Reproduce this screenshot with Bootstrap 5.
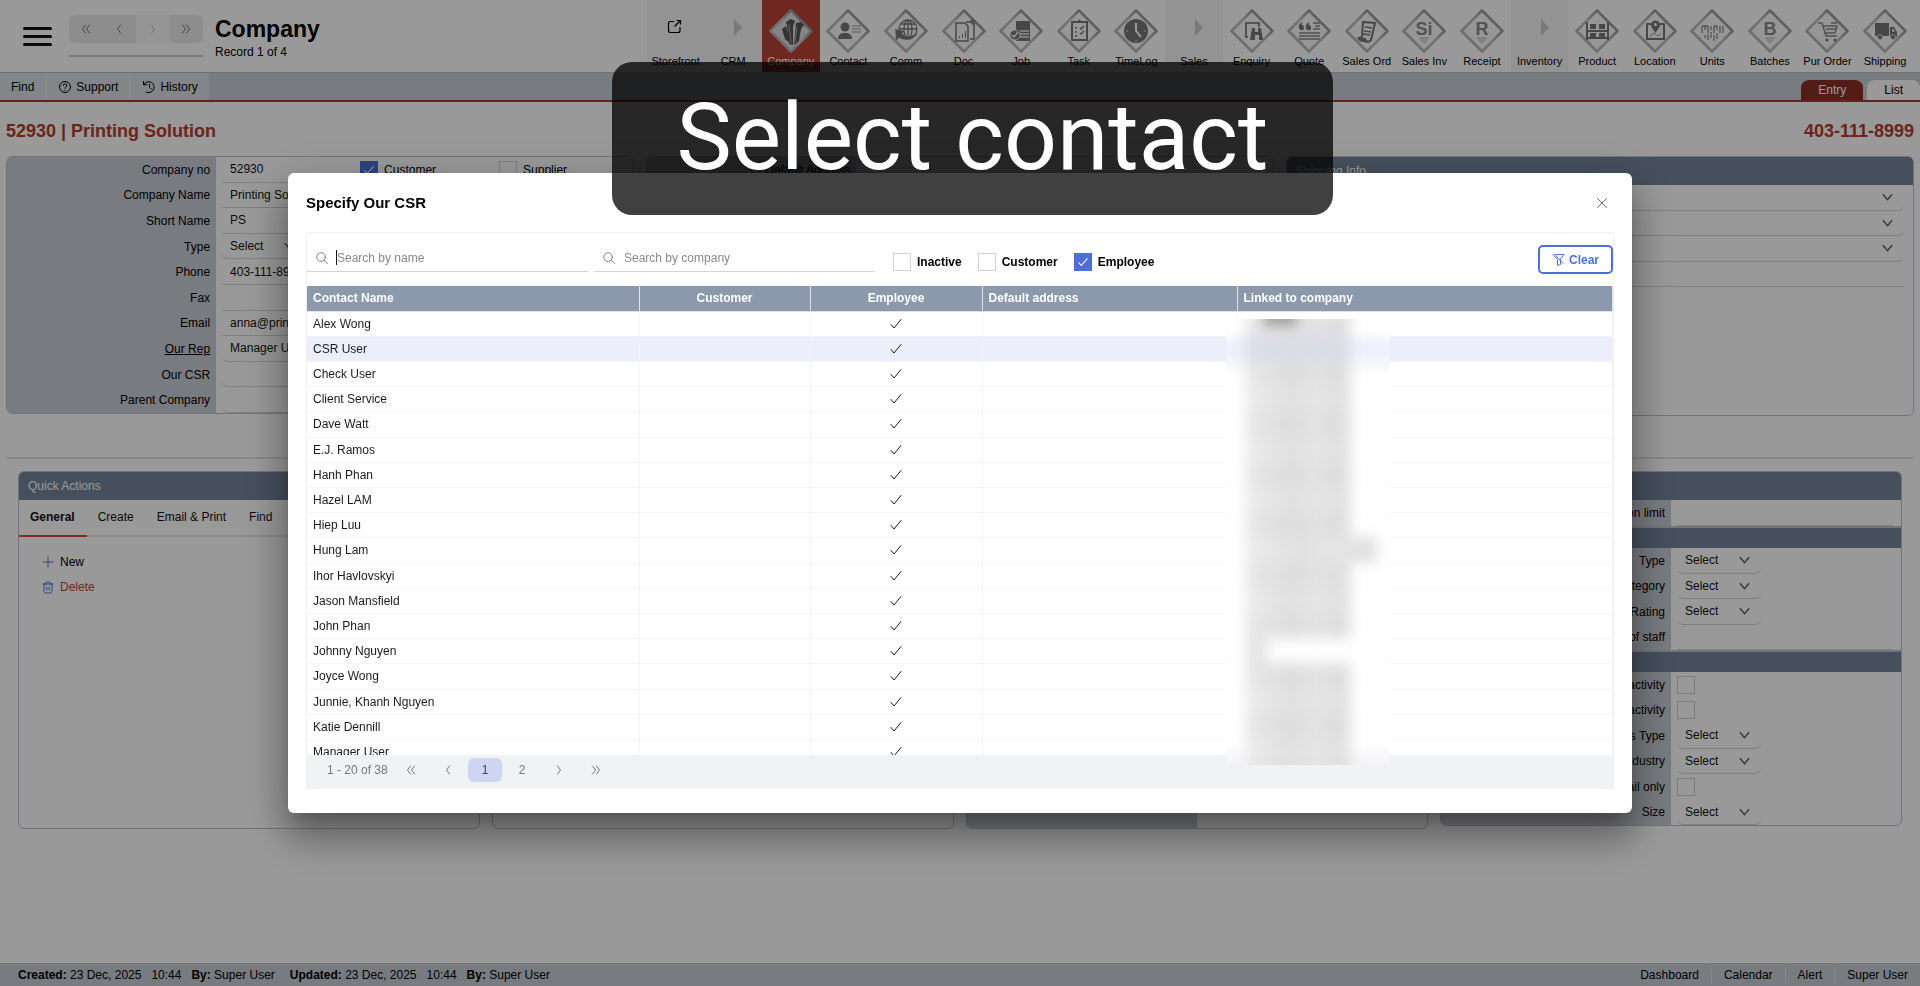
<!DOCTYPE html>
<html lang="en">
<head>
<meta charset="utf-8">
<meta name="viewport" content="width=device-width, initial-scale=1">
<title>Company</title>
<link href="https://cdn.jsdelivr.net/npm/bootstrap@5.3.0/dist/css/bootstrap.min.css" rel="stylesheet">
<style>
:root{--bar:#c8cdd5;--slate:#75849c;--head:#8c99ad;--red:#b84334;--deep:#8c3027;--blue:#4f6fd8}
body{font-family:"Liberation Sans",Arial,sans-serif;font-size:12px;line-height:16px;color:#000;background:#fff}
svg{display:block;flex:none}
.line{fill:none;stroke:currentColor;stroke-linecap:round;stroke-linejoin:round}
a{color:inherit;text-decoration:none}
h1{font-size:23px;line-height:28px}
h2{font-size:18px;line-height:20px;color:#b23c2e}
.topbar{height:73px;border-bottom:1px solid #bbb}
.burger{width:29px;height:19px;margin:27px 0 0 23px;border:0;background:none}
.burger span{height:3px;background:#111;border-radius:2px}
.recnav{width:134px;margin-left:17px;padding-top:15px}
.recnav .set{height:28px;border-radius:6px;background:#ececec;overflow:hidden}
.recnav button{border:0;background:none;color:#777}
.recnav button:disabled{background:#f8f8f8;color:#bbb}
.recnav .rule{height:2px;background:var(--bar);margin-top:12px}
.heading{padding:15px 0 0 12px}
.heading .count{padding-top:1px}
.modules{width:66%;margin-right:6px}
.modules a{flex:1 1 0;min-width:0;font-size:11px;padding-top:9px;color:#000}
.modules a.group{background:#f5f5f5}
.modules a.current{background:var(--red);color:#fff}
.modules .pic{height:44px}
.subbar{height:29px;background:var(--bar);border-bottom:2px solid #a63a2d}
.subbar .act{background:#d9dfe4;border-right:2px solid #e3e6ea;padding:0 11px}
.subbar .act:last-of-type{border:0}
.viewtab{height:20px;padding:0 17px;border-radius:8px 8px 0 0;background:#fff}
.viewtab.active{background:var(--deep);color:#fff}
.content{padding:19px 6px 0}
.panels{--bs-gutter-x:12px;margin-top:15px}
.cards{--bs-gutter-x:12px;margin-top:12px;padding:0 12px}
.panel{border:1px solid #bcc3ce;border-radius:6px;overflow:hidden}
.tall-card{height:358px}
.rows{height:256px}
.frow{flex:1 1 0}
.lab{width:33.4%;background:var(--bar);padding-right:6px;text-align:right;flex:none}
.half .lab{width:50%}
.field{border:0;border-bottom:1px solid #d5d5d5;background:none;height:100%;padding:0 8px;color:#111;outline:0;min-width:0}
.soft{border-radius:0 0 6px 6px}
select.field{appearance:none;background:url("data:image/svg+xml,%3Csvg xmlns='http://www.w3.org/2000/svg' viewBox='0 0 12 8'%3E%3Cpath d='M1 1l5 6 5-6' fill='none' stroke='%23555' stroke-width='1.4'/%3E%3C/svg%3E") no-repeat right 11px center/11px 8px}
select.short{width:84px}
.opt{gap:6px}
.bar{background:var(--slate);color:#fff;height:28px;padding:0 9px}
.bar.thin{height:22px;border-top:2px solid #bcc3ce}
.form-check-input{width:18px;height:18px;margin:0;border-radius:0!important;border:1px solid #d0d0d0;flex:none}
.form-check-input:checked{background-color:var(--blue);border-color:var(--blue);background-image:url("data:image/svg+xml,%3Csvg xmlns='http://www.w3.org/2000/svg' viewBox='0 0 18 18'%3E%3Cpath d='M4 9.500l3 3.500 7-8' fill='none' stroke='%23fff' stroke-width='1.200'/%3E%3C/svg%3E")}
.divide{height:2px;background:#e2e2e2;margin-top:41px}
.tabs{height:37px;border-bottom:2px solid #e8e8e8}
.tabs a{padding:9px 12px 9px 11px;height:37px;color:#111}
.tabs a.active{font-weight:700;border-bottom:2px solid #d64a38}
.tasks{padding:17px 23px;gap:9px}
.statusbar{height:23px;background:var(--bar)}
.stamps{padding-left:18px;gap:10px}
.stamps .next{margin-left:5px}
.statusbar nav a{padding:0 12px}
.modal-backdrop{opacity:.4}
.modal-dialog{max-width:70%;min-height:100%;margin-top:0;margin-bottom:0}
.modal-content{border:0;border-radius:6px;padding:0 18px 24px;box-shadow:0 11px 15px -7px rgba(0,0,0,.2),0 24px 38px 3px rgba(0,0,0,.3),0 9px 46px 8px rgba(0,0,0,.12)}
.modal-head{height:59px}
.modal-head .title{font-size:15px;font-weight:700}
.plain{border:0;background:none;color:#666;padding:0 7px 0 0}
.finder{border:1px solid #f0f0f0;border-bottom:0}
.filters{height:53px}
.seek{width:281px;border-bottom:1px solid #d5d5d5;height:24px;color:#777;padding:0 0 3px 9px}
.seek + .seek{margin-left:6px}
.seek input{border:0;outline:0;font-size:12px;padding:0;margin-left:9px}
.seek input::placeholder{color:#888}
.caret{width:1px;height:15px;background:#111;margin-left:8px}
.caret + input{margin-left:0!important}
.ticks{padding:4px 0 0 18px;gap:16px}
.clear{border:2px solid var(--blue);border-radius:5px;color:var(--blue);background:#fff;font-weight:700;width:75px;height:29px}
.people{height:469px;overflow:hidden}
.people table{table-layout:fixed;margin:0;font-size:12px;color:#1a1a1a}
.people th,.people td{height:25px;padding:0 6px;line-height:16px;vertical-align:middle;border:0 solid #f3f4f6;border-width:0 1px 1px 0;background:none;box-shadow:none}
.people thead th{background:var(--head);color:#fff;border-color:#dfe3e9}
.people tbody tr:nth-child(5n) td{height:26px}
.people tbody tr.picked td{background:#eceffb}
.people td svg{margin:0 auto}
.veil{position:absolute;left:70%;margin-left:5px;top:33px;width:164px;height:446px;overflow:hidden;background:linear-gradient(#fff 0,#fff 10px,#eef1fb 26px,#eef1fb 34px,#fff 58px,#fff 422px,#f3f4f6 446px)}
.veil .smears{margin-top:-8px;padding-left:19px;filter:blur(7px)}
.veil .smears div{height:25px;width:105px;background:linear-gradient(90deg,#ececec,#e0e0e0 45%,#e6e6e6 65%,#dfdfdf 95%)}
.veil .smears div:nth-child(odd){background:linear-gradient(90deg,#e9e9e9,#dcdcdc 45%,#e3e3e3 65%,#dcdcdc 95%)}
.veil .smears div:nth-child(2){background:#d9dde6}
.veil .smears .tall{height:26px}
.veil .bleed{position:absolute;left:38px;top:-8px;width:32px;height:14px;background:#999;filter:blur(6px)}
.pager{height:34px;background:#f1f2f4;color:#777;padding:0 0 4px 20px;gap:3px}
.pager .total{width:64px}
.pager button{border:0;background:none;width:34px;height:24px;border-radius:6px;color:#777}
.pager button.on{background:#cdd5f2;color:#444}
.caption{position:fixed;z-index:2000;left:612px;right:587px;top:62px;height:153px;border-radius:20px;background:rgba(0,0,0,.75);color:#fff;font-family:Roboto,sans-serif;font-size:93px;line-height:151px}
</style>
</head>
<body>
<svg width="0" height="0" class="position-absolute">
<defs>
<linearGradient id="edge" x1="0" y1="1" x2="1" y2="0"><stop offset="0" stop-color="#a8a8a8"/><stop offset=".5" stop-color="#c2c2c2"/><stop offset="1" stop-color="#777"/></linearGradient>
<symbol id="left" viewBox="0 0 10 10"><path class="line" d="M6.500 1L3.500 5l3 4"/></symbol>
<symbol id="right" viewBox="0 0 10 10"><path class="line" d="M3.500 1l3 4-3 4"/></symbol>
<symbol id="first" viewBox="0 0 10 10"><path class="line" d="M4.500 1L1.500 5l3 4M8.500 1l-3 4 3 4"/></symbol>
<symbol id="last" viewBox="0 0 10 10"><path class="line" d="M1.500 1l3 4-3 4M5.500 1l3 4-3 4"/></symbol>
<symbol id="tick" viewBox="0 0 12 12"><path class="line" d="M1 6.500L4 10l7-8.500"/></symbol>
<symbol id="lens" viewBox="0 0 13 13"><circle class="line" cx="5.500" cy="5.500" r="4.700"/><path class="line" d="M9 9l3.500 3.500"/></symbol>
</defs>
</svg>

<div class="d-flex flex-column vh-100">
  <header class="topbar d-flex">
    <button class="burger d-flex flex-column justify-content-between p-0 align-self-start" aria-label="Menu"><span class="w-100"></span><span class="w-100"></span><span class="w-100"></span></button>
    <div class="recnav">
      <div class="set d-flex">
        <button class="flex-fill p-0" aria-label="First"><svg class="mx-auto" width="10" height="10"><use href="#first"/></svg></button>
        <button class="flex-fill p-0" aria-label="Previous"><svg class="mx-auto" width="10" height="10"><use href="#left"/></svg></button>
        <button class="flex-fill p-0" disabled aria-label="Next"><svg class="mx-auto" width="10" height="10"><use href="#right"/></svg></button>
        <button class="flex-fill p-0" aria-label="Last"><svg class="mx-auto" width="10" height="10"><use href="#last"/></svg></button>
      </div>
      <div class="rule"></div>
    </div>
    <div class="heading"><h1 class="fw-bold mb-0">Company</h1><div class="count">Record 1 of 4</div></div>
    <nav class="modules d-flex ms-auto text-center" id="modules"></nav>
  </header>

  <div class="subbar d-flex align-items-stretch">
    <a class="act d-flex align-items-center" href="#">Find</a>
    <a class="act d-flex align-items-center gap-1" href="#"><svg width="14" height="14" viewBox="0 0 14 14"><circle class="line" cx="7" cy="7" r="5.500"/><path class="line" d="M5.300 5.500a1.700 1.700 0 1 1 2.500 1.500q-.8.500-.8 1.300M7 10.200v.1"/></svg>Support</a>
    <a class="act d-flex align-items-center gap-1" href="#"><svg width="14" height="14" viewBox="0 0 14 14"><path class="line" d="M1.500 1.500v3.300h3.300M1.800 4.500A5.500 5.500 0 1 1 4 12M7.500 4v3.300l2 2"/></svg>History</a>
    <div class="ms-auto d-flex align-self-end gap-1">
      <a class="viewtab active d-flex align-items-center" href="#">Entry</a>
      <a class="viewtab d-flex align-items-center" href="#">List</a>
    </div>
  </div>

  <main class="content flex-grow-1 overflow-hidden">
    <div class="d-flex justify-content-between"><h2 class="fw-bold mb-0">52930 | Printing Solution</h2><h2 class="fw-bold mb-0">403-111-8999</h2></div>
    <div class="panels row row-cols-3 align-items-start">
      <div class="col"><section class="panel"><div class="rows d-flex flex-column" id="details"></div></section></div>
      <div class="col"><section class="panel"><div class="rows d-flex flex-column"><div class="frow d-flex"><label class="lab d-flex align-items-center justify-content-end" for="addr">Default Address</label><input id="addr" class="field flex-fill"></div><div class="d-flex" style="flex:9"><div class="lab"></div></div></div></section></div>
      <div class="col"><section class="panel" style="height:260px">
        <div class="bar d-flex align-items-center">Shipping Info</div>
        <div class="d-flex flex-column" style="height:102px;padding:0 9px 0 14px">
          <select class="field soft frow" aria-label="Ship via"><option></option></select>
          <select class="field soft frow" aria-label="Terms"><option></option></select>
          <select class="field soft frow" aria-label="Zone"><option></option></select>
          <input class="field frow" aria-label="Account">
        </div>
      </section></div>
    </div>
    <div class="divide"></div>
    <div class="cards row row-cols-4 align-items-start">
      <div class="col"><section class="panel tall-card">
        <div class="bar d-flex align-items-center">Quick Actions</div>
        <nav class="tabs d-flex"><a class="active" href="#">General</a><a href="#">Create</a><a href="#">Email &amp; Print</a><a href="#">Find</a></nav>
        <div class="tasks d-flex flex-column">
          <a href="#" class="opt d-flex align-items-center"><svg width="12" height="12" viewBox="0 0 12 12" style="color:#4f6fd8"><path class="line" d="M6 1v10M1 6h10"/></svg>New</a>
          <a href="#" class="opt d-flex align-items-center" style="color:#c4402f"><svg width="12" height="13" viewBox="0 0 12 13" style="color:#4f6fd8"><path class="line" d="M1 3h10M3.500 3q0-2 1.500-2h2q1.500 0 1.500 2M2 3v7.500q0 1.500 1.500 1.500h5q1.500 0 1.500-1.500V3M4.800 6v3M7.200 6v3"/></svg>Delete</a>
        </div>
      </section></div>
      <div class="col"><section class="panel tall-card"></section></div>
      <div class="col"><section class="panel tall-card d-flex half"><div class="lab"></div></section></div>
      <div class="col"><section class="panel half" id="traits"><div class="bar"></div></section></div>
    </div>
  </main>

  <footer class="statusbar d-flex align-items-center justify-content-between">
    <div class="stamps d-flex"><span><b>Created:</b> 23 Dec, 2025</span><span>10:44</span><span><b>By:</b> Super User</span><span class="next"><b>Updated:</b> 23 Dec, 2025</span><span>10:44</span><span><b>By:</b> Super User</span></div>
    <nav class="d-flex"><a class="border-end" href="#">Dashboard</a><a class="border-end" href="#">Calendar</a><a class="border-end" href="#">Alert</a><a href="#">Super User</a></nav>
  </footer>
</div>

<div class="modal-backdrop"></div>
<div class="modal d-block" role="dialog" aria-labelledby="dlgTitle">
  <div class="modal-dialog modal-dialog-centered">
    <div class="modal-content">
      <div class="modal-head d-flex align-items-center justify-content-between">
        <div class="title" id="dlgTitle">Specify Our CSR</div>
        <button class="plain" aria-label="Close"><svg width="10" height="10" viewBox="0 0 10 10"><path class="line" d="M.5.500l9 9M9.500.500l-9 9"/></svg></button>
      </div>
      <div class="finder">
        <div class="filters d-flex align-items-center">
          <div class="seek d-flex align-items-center"><svg width="12" height="12"><use href="#lens"/></svg><span class="caret"></span><input class="flex-fill" placeholder="Search by name" aria-label="Search by name"></div>
          <div class="seek d-flex align-items-center"><svg width="12" height="12"><use href="#lens"/></svg><input class="flex-fill" placeholder="Search by company" aria-label="Search by company"></div>
          <div class="ticks d-flex align-items-center fw-bold">
            <label class="opt d-flex align-items-center"><input type="checkbox" class="form-check-input">Inactive</label>
            <label class="opt d-flex align-items-center"><input type="checkbox" class="form-check-input">Customer</label>
            <label class="opt d-flex align-items-center"><input type="checkbox" class="form-check-input" checked>Employee</label>
          </div>
          <button class="clear ms-auto p-0 d-flex align-items-center justify-content-center"><svg width="13" height="13" viewBox="0 0 13 13" class="me-1"><path class="line" d="M4.500 1.500h7.500L8.500 6v5.500l-3 1V6.500L1 1.500M2.500 1l8.500 9.500"/></svg>Clear</button>
        </div>
        <div class="position-relative">
          <div class="people">
            <table class="table">
              <colgroup><col style="width:332px"><col style="width:171px"><col style="width:172px"><col style="width:255px"><col></colgroup>
              <thead><tr><th>Contact Name</th><th class="text-center">Customer</th><th class="text-center">Employee</th><th>Default address</th><th>Linked to company</th></tr></thead>
              <tbody id="people"></tbody>
            </table>
          </div>
          <div class="veil"><div class="smears" id="smears"></div><div class="bleed"></div></div>
          <div class="pager d-flex align-items-center">
            <span class="total">1 - 20 of 38</span>
            <button aria-label="First"><svg class="mx-auto" width="10" height="10"><use href="#first"/></svg></button>
            <button aria-label="Previous"><svg class="mx-auto" width="10" height="10"><use href="#left"/></svg></button>
            <button class="on">1</button><button>2</button>
            <button aria-label="Next"><svg class="mx-auto" width="10" height="10"><use href="#right"/></svg></button>
            <button aria-label="Last"><svg class="mx-auto" width="10" height="10"><use href="#last"/></svg></button>
          </div>
        </div>
      </div>
    </div>
  </div>
</div>
<div class="caption text-center text-nowrap">Select contact</div>

<script src="https://cdn.jsdelivr.net/npm/bootstrap@5.3.0/dist/js/bootstrap.bundle.min.js"></script>
<script>
// Artwork for the module tiles, drawn on a 44 x 44 board inside the diamond.
const letter = t => `<text x="22" y="26" text-anchor="middle" font-weight="700" font-size="18" fill="#8a8a8a">${t}</text><path d="M17 29h10M18.500 31h7M20 33h4" stroke="#b0b0b0"/>`;
const art = {
  Company:'<path d="M13 20l4-3 4 17-5-4zM17 13l5-3 4 2-2 5v19l-4-1-2-18zM27 14l5-1 3 3-3 4-2 12-5 4z" fill="#555"/><path d="M20 15l2 19M28 18l-2 15" stroke="#aaa"/>',
  Contact:'<circle cx="19" cy="18" r="4.500"/><path d="M12 30q0-5 5-6h4q5 1 5 6z"/><path d="M26 17h9M26 20h9M26 23h9" stroke="#999"/>',
  Comm:'<g fill="none" stroke="#777" stroke-width="1.300"><circle cx="24" cy="20" r="9"/><ellipse cx="24" cy="20" rx="4" ry="9"/><path d="M15 20h18M24 11v18M17 15h14"/></g><path d="M11 20l10 2-3 3q7 4 16-1-7 11-19 5l-3 3z" stroke="#ddd" stroke-width=".5"/>',
  Doc:'<g fill="none" stroke="#777" stroke-width="1.500"><path d="M14 14h9l3 3v15H14zM24 13h5l3 3v14h-4M28 12h4v14"/></g><path d="M17 29v-2h1v2zM20 29v-4h1v4zM23 29v-7h1v7z"/>',
  Job:'<path d="M17 12h14v20H17z"/><path d="M21 22h9M21 25h9M21 28h9" stroke="#eee" stroke-width="1.500"/><circle cx="16" cy="26" r="5" stroke="#eee"/><path d="M13 26l2 2 4-5" stroke="#fff" stroke-width="1.500" fill="none"/>',
  Task:'<path d="M15 13h15v18H15z" fill="none" stroke="#777" stroke-width="2"/><path d="M18 14v-2h3q1-3 3 0h3v2z"/><path d="M18 19h2M18 23h2M18 27h2M23 19l1 1 3-3M23 24l1 1 3-3" stroke="#777" fill="none" stroke-width="1.500"/>',
  TimeLog:'<circle cx="22" cy="22" r="12"/><path d="M22 14v8l5 6" stroke="#fff" stroke-width="2" fill="none"/><path d="M12 22h2M30 22h2M22 31v2" stroke="#ddd"/>',
  Enquiry:'<path d="M18 28h-2V14h13v4" fill="none" stroke="#888" stroke-width="2"/><path d="M20 31l2-12h3v4h3v-4h3l2 12h-4v-5h-4v5z"/>',
  Quote:'<path d="M12 17q0-3 4-4-2 2-1 3 2 0 2 3t-3 2-2-4zM19 17q0-3 4-4-2 2-1 3 2 0 2 3t-3 2-2-4z"/><path d="M26 14h7M28 17h5M26 20h7M12 24h21M12 27h21M12 30h21" stroke="#888" stroke-width="1.500"/>',
  'Sales Ord':'<path d="M18 13l12 1-4 17q-2 3-6 1l-6-3 3-1z" fill="none" stroke="#777" stroke-width="2"/><path d="M20 18l7 1M19 22l7 1M18 25l7 1" stroke="#777" stroke-width="1.500"/><path d="M13 28l8 1q0 3 3 3-5 3-11-1z"/>',
  'Sales Inv':letter('Si'), Receipt:letter('R'), Batches:letter('B'),
  Product:'<path d="M12 13v18M33 13v18M12 22h21M12 29h21" stroke="#777" stroke-width="2"/><path d="M15 15h6v5h-6zM24 15h6v5h-6zM15 24h6v4h-6zM24 24h6v4h-6z"/>',
  Location:'<path d="M18 15h-4v15h17V15h-4" fill="none" stroke="#777" stroke-width="2"/><path d="M22.500 24l-4-6a4.500 4.500 0 1 1 8 0z"/><circle cx="22.500" cy="15.500" r="1.500" fill="#fff"/><path d="M17 27l4-3 4 3 4-3" stroke="#777" fill="none" stroke-dasharray="2 1"/>',
  Units:'<path d="M12 17v7M15 17v4M18 17v7M21 17v4M24 17v7M27 17v4M30 17v7M33 17v7M12 17h6M24 17h3M15 26v3M18 25v6M21 23v6M24 26v6M27 24v6" stroke="#8a8a8a" stroke-width="1.300"/>',
  'Pur Order':'<path d="M13 14h4l4 13h11M18 17h14l-2 7H20M26 14h6M21 20h10" fill="none" stroke="#888" stroke-width="1.500"/><circle cx="22" cy="31" r="1.500"/><circle cx="30" cy="31" r="1.500"/>',
  Shipping:'<path d="M12 14h14v13H12zM27 18h4l3 5v5h-7z"/><path d="M29 20h2l1 3h-3z" fill="#ddd"/><circle cx="17" cy="28" r="2.500" stroke="#ddd"/><circle cx="30" cy="28" r="2.500" stroke="#ddd"/>'
};
const groups = {Storefront:'<path d="M20 12.500h-3.500q-2 0-2 2v7q0 2 2 2h7.500q2 0 2-2V18M20.500 17.500l5.500-5.500M22.500 11.500h4v4" fill="none" stroke="#000" stroke-width="1.200"/>', CRM:'', Sales:'', Inventory:''};
const arrow = '<path d="M23 10v17l8-8.500z" fill="#c8c8c8"/>';
document.getElementById('modules').innerHTML = ['Storefront','CRM','Company','Contact','Comm','Doc','Job','Task','TimeLog','Sales','Enquiry','Quote','Sales Ord','Sales Inv','Receipt','Inventory','Product','Location','Units','Batches','Pur Order','Shipping'].map(n => {
  const g = n in groups;
  const pic = g ? (groups[n] || arrow) : `<path d="M22 1.500L42.500 22 22 42.500 1.500 22z" fill="${n=='Company'?'#ddd':'#fbfbfb'}" stroke="url(#edge)" stroke-width="2.500" stroke-linejoin="round"/><g fill="#777">${art[n]}</g>`;
  return `<a href="#" class="${g?'group':''} ${n=='Company'?'current':''}"><div class="pic"><svg class="mx-auto" width="44" height="44">${pic}</svg></div><div class="text-nowrap">${n}</div></a>`;
}).join('');

const frow = (id, label, control) => `<div class="frow d-flex"><label class="lab d-flex align-items-center justify-content-end text-nowrap" for="${id}">${label}</label><div class="d-flex flex-fill align-items-center" style="padding:0 8px 0 6px">${control}</div></div>`;
const text = (id, v, soft) => `<input id="${id}" class="field flex-fill ${soft?'soft':''}" value="${v}">`;
const pick = id => `<select id="${id}" class="field soft short"><option>Select</option></select>`;
const tick = id => `<input id="${id}" type="checkbox" class="form-check-input">`;
document.getElementById('details').innerHTML = [
  frow('no','Company no','<input id="no" class="field" style="width:138px" value="52930"><label class="opt d-flex align-items-center" style="width:139px"><input type="checkbox" class="form-check-input" checked>Customer</label><label class="opt d-flex align-items-center"><input type="checkbox" class="form-check-input">Supplier</label>'),
  frow('cname','Company Name',text('cname','Printing Solution')),
  frow('sname','Short Name',text('sname','PS')),
  frow('type','Type',pick('type')),
  frow('phone','Phone',text('phone','403-111-8999')),
  frow('fax','Fax',text('fax','')),
  frow('email','Email',text('email','anna@printing')),
  frow('rep','<u>Our Rep</u>',text('rep','Manager User',1)),
  frow('csr','Our CSR',text('csr','',1)),
  frow('parent','Parent Company',text('parent','',1))
].join('');
const block = (h, rows) => `<div class="d-flex flex-column" style="height:${h}px">${rows.join('')}</div>`;
document.getElementById('traits').innerHTML +=
  block(26,[frow('limit','Transaction limit',text('limit',''))]) + '<div class="bar thin"></div>' +
  block(102,[frow('t1','Type',pick('t1')),frow('t2','Category',pick('t2')),frow('t3','Rating',pick('t3')),frow('t4','No. of staff',text('t4',''))]) + '<div class="bar thin"></div>' +
  block(153,[frow('a1','Last activity',tick('a1')),frow('a2','Next activity',tick('a2')),frow('a3','Business Type',pick('a3')),frow('a4','Industry',pick('a4')),frow('a5','Email only',tick('a5')),frow('a6','Size',pick('a6'))]);

const names = ['Alex Wong','CSR User','Check User','Client Service','Dave Watt','E.J. Ramos','Hanh Phan','Hazel LAM','Hiep Luu','Hung Lam','Ihor Havlovskyi','Jason Mansfield','John Phan','Johnny Nguyen','Joyce Wong','Junnie, Khanh Nguyen','Katie Dennill','Manager User'];
document.getElementById('people').innerHTML = names.map((n,i) => `<tr class="${i==1?'picked':''}"><td>${n}</td><td></td><td><svg width="12" height="12"><use href="#tick"/></svg></td><td></td><td></td></tr>`).join('');
// Redacted company names: one soft smear per row, sized to the hidden text.
const widths = {'Hung Lam':132,'Johnny Nguyen':22};
document.getElementById('smears').innerHTML = names.map((n,i) => `<div class="${i%5==4?'tall':''}" style="width:${widths[n]||105}px"></div>`).join('') + '<div></div>';
</script>
</body>
</html>
